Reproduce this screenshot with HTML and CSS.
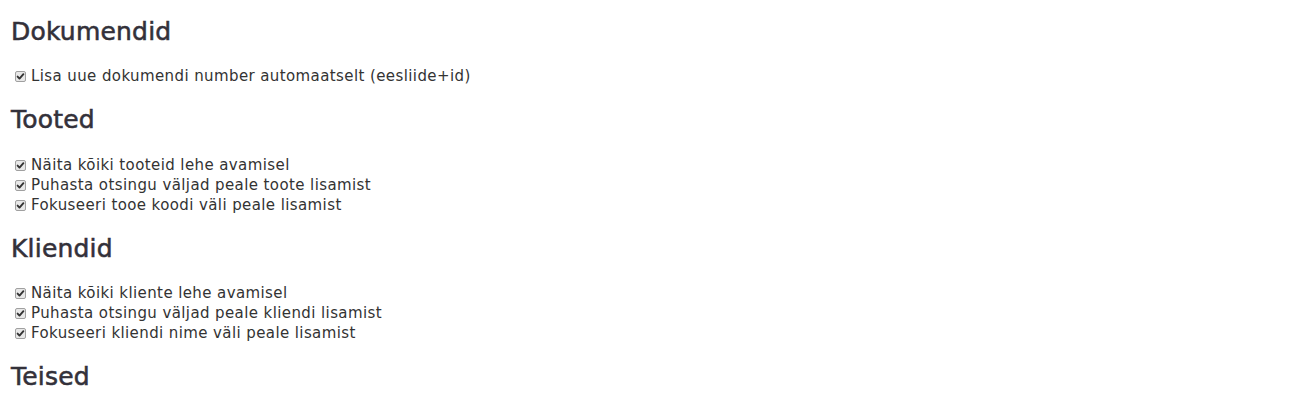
FILE: index.html
```html
<!DOCTYPE html>
<html lang="et">
<head>
<meta charset="utf-8">
<title>Seaded</title>
<link rel="stylesheet" href="styles.css">
</head>
<body>
<div class="page">
  <section class="group">
    <h3 class="title">Dokumendid</h3>
    <div class="opts">
      <label class="opt"><svg class="cb" viewBox="0 0 11 11"><rect x="0.5" y="0.5" width="10" height="10" rx="1.5" class="box"/><path d="M2.6 5.6 L4.5 7.6 L8.4 3.2" class="tick"/></svg><span>Lisa uue dokumendi number automaatselt (eesliide+id)</span></label>
    </div>
  </section>
  <section class="group">
    <h3 class="title">Tooted</h3>
    <div class="opts">
      <label class="opt"><svg class="cb" viewBox="0 0 11 11"><rect x="0.5" y="0.5" width="10" height="10" rx="1.5" class="box"/><path d="M2.6 5.6 L4.5 7.6 L8.4 3.2" class="tick"/></svg><span>Näita kõiki tooteid lehe avamisel</span></label>
      <label class="opt"><svg class="cb" viewBox="0 0 11 11"><rect x="0.5" y="0.5" width="10" height="10" rx="1.5" class="box"/><path d="M2.6 5.6 L4.5 7.6 L8.4 3.2" class="tick"/></svg><span>Puhasta otsingu väljad peale toote lisamist</span></label>
      <label class="opt"><svg class="cb" viewBox="0 0 11 11"><rect x="0.5" y="0.5" width="10" height="10" rx="1.5" class="box"/><path d="M2.6 5.6 L4.5 7.6 L8.4 3.2" class="tick"/></svg><span>Fokuseeri tooe koodi väli peale lisamist</span></label>
    </div>
  </section>
  <section class="group">
    <h3 class="title">Kliendid</h3>
    <div class="opts">
      <label class="opt"><svg class="cb" viewBox="0 0 11 11"><rect x="0.5" y="0.5" width="10" height="10" rx="1.5" class="box"/><path d="M2.6 5.6 L4.5 7.6 L8.4 3.2" class="tick"/></svg><span>Näita kõiki kliente lehe avamisel</span></label>
      <label class="opt"><svg class="cb" viewBox="0 0 11 11"><rect x="0.5" y="0.5" width="10" height="10" rx="1.5" class="box"/><path d="M2.6 5.6 L4.5 7.6 L8.4 3.2" class="tick"/></svg><span>Puhasta otsingu väljad peale kliendi lisamist</span></label>
      <label class="opt"><svg class="cb" viewBox="0 0 11 11"><rect x="0.5" y="0.5" width="10" height="10" rx="1.5" class="box"/><path d="M2.6 5.6 L4.5 7.6 L8.4 3.2" class="tick"/></svg><span>Fokuseeri kliendi nime väli peale lisamist</span></label>
    </div>
  </section>
  <section class="group">
    <h3 class="title">Teised</h3>
  </section>
</div>
</body>
</html>
```
FILE: styles.css
```css
html, body {
  margin: 0;
  padding: 0;
  background: #ffffff;
}
body {
  font-family: "DejaVu Sans", Verdana, sans-serif;
  color: #333333;
}
.page {
  padding: 19px 11px 0 11px;
}
.title {
  margin: 0 0 21px 0;
  font-size: 25px;
  line-height: 26.4px;
  font-weight: normal;
  letter-spacing: 0.2px;
  color: #33313a;
  -webkit-text-stroke: 0.55px #33313a;
}
.opts {
  display: flex;
  flex-direction: column;
  margin-bottom: 21px;
}
.opt {
  display: flex;
  align-items: center;
  font-size: 15px;
  line-height: 20px;
  height: 20px;
  letter-spacing: 0.4px;
}
.cb {
  width: 11px;
  height: 11px;
  margin: 1px 5px 0 4px;
  flex: none;
}
.box {
  fill: #e8e8e8;
  stroke: #a0a0a0;
  stroke-width: 1;
}
.tick {
  fill: none;
  stroke: #333333;
  stroke-width: 1.9;
  stroke-linecap: round;
  stroke-linejoin: round;
}
```
